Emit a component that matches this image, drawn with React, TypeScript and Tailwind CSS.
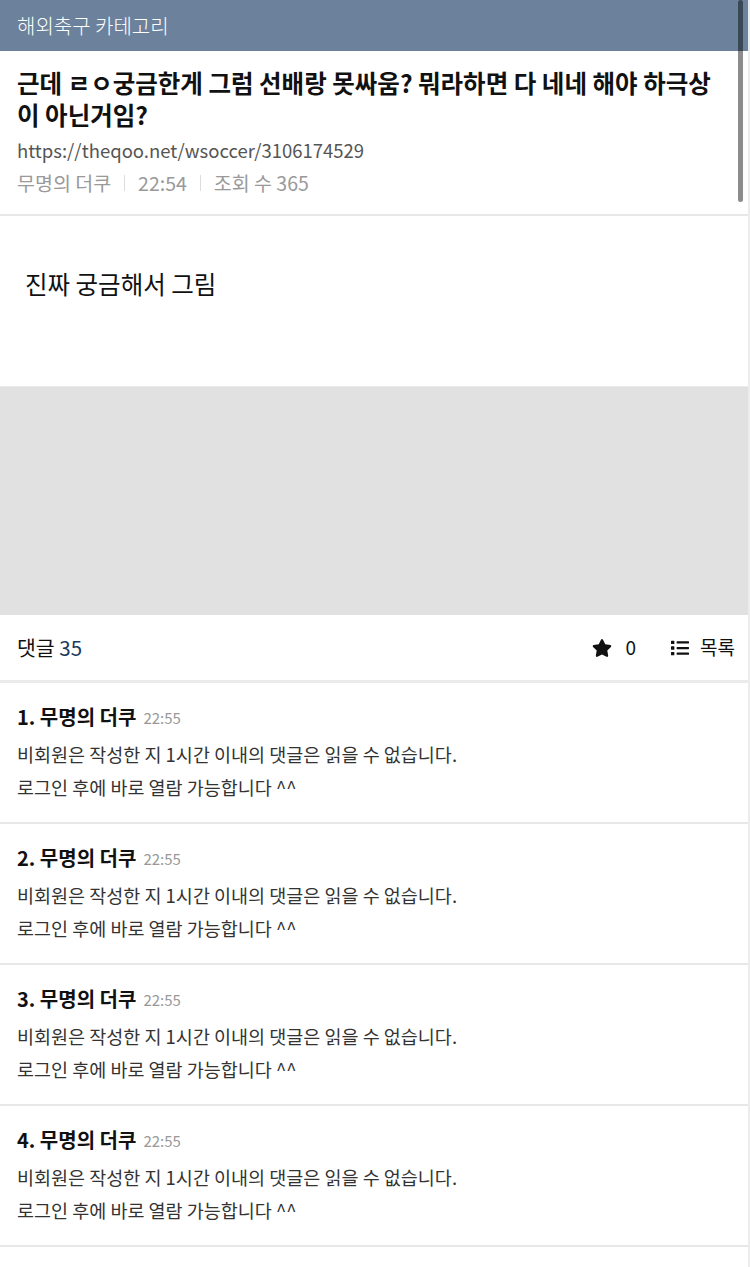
import React from 'react'
import { FaStar, FaList } from 'react-icons/fa'

const COMMENTS = [1, 2, 3, 4].map((n) => ({
    no: n,
    name: '무명의 더쿠',
    time: '22:55',
    lines: [
        '비회원은 작성한 지 1시간 이내의 댓글은 읽을 수 없습니다.',
        '로그인 후에 바로 열람 가능합니다 ^^',
    ],
}))

function Comment({ no, name, time, lines }: (typeof COMMENTS)[number]) {
    return (
        <div className="px-[17px] pt-[20px] pb-[18px] border-b-2 border-[#e8e8e8]">
            <div className="h-[28px] flex items-center gap-[7px]">
                <span className="text-[20px] leading-[28px] font-bold text-[#111]">
                    {no}. {name}
                </span>
                <span className="text-[15px] leading-[28px] text-[#999] pt-[2px]">{time}</span>
            </div>
            <div className="mt-[7px] text-[18.5px] leading-[33px] text-[#333]">
                {lines.map((l) => (
                    <p key={l}>{l}</p>
                ))}
            </div>
        </div>
    )
}

export default function App() {
    return (
        <div
            className="relative w-[750px] bg-white border-r-2 border-[#ececec]"
            style={{ fontFamily: '"Noto Sans CJK KR", "Noto Sans", sans-serif' }}
        >
            {/* header */}
            <div className="h-[51px] bg-[#6b819c] px-[17px] flex items-center">
                <span className="text-[20px] text-white font-light">해외축구 카테고리</span>
            </div>

            {/* title block */}
            <div className="px-[17px] pt-[16px] pb-[17px] border-b-2 border-[#e8e8e8]">
                <h1 className="text-[24.5px] leading-[32px] font-bold text-[#111]">
                    근데 ㄹㅇ궁금한게 그럼 선배랑 못싸움? 뭐라하면 다 네네 해야 하극상
                    <br />이 아닌거임?
                </h1>
                <div className="mt-[5px] text-[18.5px] leading-[28px] text-[#555]">
                    https://theqoo.net/wsoccer/3106174529
                </div>
                <div className="mt-[5px] flex items-center text-[19.5px] leading-[28px] text-[#999]">
                    <span>무명의 더쿠</span>
                    <span className="mx-[13px] h-[16px] w-px bg-[#ddd]" />
                    <span>22:54</span>
                    <span className="mx-[13px] h-[16px] w-px bg-[#ddd]" />
                    <span>조회 수 365</span>
                </div>
            </div>

            {/* body */}
            <div className="h-[170px] px-[25px] pt-[53px]">
                <p className="text-[24.5px] leading-[30px] text-[#111]">진짜 궁금해서 그림</p>
            </div>
            <div className="h-[229px] bg-[#e1e1e1] border-t border-[#ebebeb]" />

            {/* comment bar */}
            <div className="h-[68px] pl-[17px] pr-[13px] flex items-center justify-between border-b-[3px] border-[#ebebeb]">
                <div className="text-[20.5px] text-[#111]">
                    댓글 <span className="text-[#1d3a5c]">35</span>
                </div>
                <div className="flex items-center text-[19px] text-[#111]">
                    <FaStar className="w-[20px] h-[20px]" />
                    <span className="ml-[13px]">0</span>
                    <FaList className="ml-[34px] w-[20px] h-[18px]" />
                    <span className="ml-[10px]">목록</span>
                </div>
            </div>

            {COMMENTS.map((c) => (
                <Comment key={c.no} {...c} />
            ))}
            <div className="h-[20px]" />

            {/* scrollbar overlay */}
            <div className="absolute top-0 right-[5px] w-[5px] h-[202px] rounded-full bg-black/45" />
        </div>
    )
}
